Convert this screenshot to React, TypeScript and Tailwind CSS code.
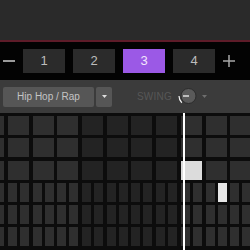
const COLS = [-1, 0, 1, 2, 3, 4, 5, 6, 7, 8, 9, 10];

// which cells are switched on: "row:col" for whole cells, "row:col:half" for split ones
const ON = new Set(["2:7", "3:8:1", "6:9:0", "6:7:0"]);

function cellTone(k: number) {
  return Math.floor((k + 1) / 4) % 2 === 0 ? "bg-[#2f2f2f]" : "bg-[#232323]";
}

function FullRow({ row }: { row: number }) {
  return (
    <div className="flex gap-[3.7px] ml-[-16.7px] h-[19px] shrink-0">
      {COLS.map((k) => (
        <div
          key={k}
          className={`w-[21px] h-[19px] shrink-0 ${ON.has(`${row}:${k}`) ? "bg-[#dcdcdc]" : cellTone(k)}`}
        />
      ))}
    </div>
  );
}

function SplitRow({ row }: { row: number }) {
  return (
    <div className="flex gap-[3.7px] ml-[-16.7px] h-[19px] shrink-0">
      {COLS.map((k) => (
        <div key={k} className="w-[21px] h-[19px] shrink-0 flex justify-between">
          {[0, 1].map((h) => (
            <div
              key={h}
              className={`w-[9px] h-[19px] ${ON.has(`${row}:${k}:${h}`) ? "bg-[#e6e6e6]" : cellTone(k)}`}
            />
          ))}
        </div>
      ))}
    </div>
  );
}

export default function App() {
  const patterns = [1, 2, 3, 4];
  const active = 3;

  return (
    <div className="relative w-[250px] h-[250px] overflow-hidden bg-[#0c0c0c] font-['Liberation_Sans',Arial,sans-serif]">
      <div className="h-[40px] bg-[#2a2a2a]" />
      <div className="h-[2px] bg-[#5e1c29]" />

      {/* pattern selector */}
      <div className="h-[38px] bg-[#030303] flex items-center gap-2 pl-[3px]">
        <span className="w-3 h-[1.5px] bg-[#9a9a9a]" />
        {patterns.map((n) => (
          <div
            key={n}
            className={`w-[42px] h-6 flex items-center justify-center text-[13px] ${
              n === active ? "bg-[#9b59e6] text-[#f1e6fb]" : "bg-[#2b2b2b] text-[#bdbdbd]"
            }`}
          >
            {n}
          </div>
        ))}
        <svg width="12" height="12" viewBox="0 0 12 12">
          <path d="M6 0V12M0 6H12" stroke="#a8a8a8" strokeWidth="1.5" />
        </svg>
      </div>

      {/* toolbar */}
      <div className="h-[33px] bg-[#3b3b3b] flex items-center pl-[3px]">
        <div className="w-[91px] h-5 bg-[#565656] rounded-[2px] flex items-center justify-center text-[10px] text-[#c4c4c4]">
          Hip Hop / Rap
        </div>
        <div className="ml-[2px] w-4 h-5 bg-[#565656] rounded-[2px] flex items-center justify-center">
          <svg width="5" height="3" viewBox="0 0 5 3">
            <path d="M0 0H5L2.5 3Z" fill="#dedede" />
          </svg>
        </div>
        <span className="ml-[25px] text-[10px] text-[#575757] tracking-[0.2px]">SWING</span>
        <svg className="ml-[6px]" width="20" height="20" viewBox="0 0 20 20">
          <circle cx="10.5" cy="9" r="7.5" fill="#5a5a5a" stroke="#2c2c2c" strokeWidth="1" />
          <path d="M5 9H11" stroke="#f4f4f4" strokeWidth="1.3" />
          <path d="M1 9A9.5 9.5 0 0 0 3.8 15.7" stroke="#f4f4f4" strokeWidth="1.2" fill="none" />
        </svg>
        <svg className="ml-1" width="5" height="3" viewBox="0 0 5 3">
          <path d="M0 0H5L2.5 3Z" fill="#6e6e6e" />
        </svg>
      </div>

      {/* step grid */}
      <div className="pt-[3px] flex flex-col gap-y-[3.3px]">
        <FullRow row={0} />
        <FullRow row={1} />
        <FullRow row={2} />
        <SplitRow row={3} />
        <SplitRow row={4} />
        <SplitRow row={5} />
        <SplitRow row={6} />
      </div>

      {/* playhead */}
      <div className="absolute left-[183px] top-[113px] bottom-0 w-[2px] bg-white" />
    </div>
  );
}
